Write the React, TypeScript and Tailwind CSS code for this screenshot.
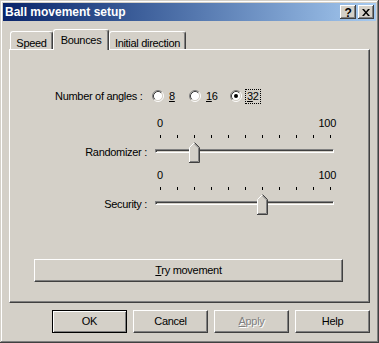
import React from 'react';

const bevel =
  'border-t border-l border-t-white border-l-white border-r border-b border-r-[#404040] border-b-[#404040] shadow-[inset_-1px_-1px_0_#808080]';

const Radio = ({ checked }: { checked: boolean }) => (
  <svg width="12" height="12" viewBox="0 0 12 12" className="shrink-0">
    <circle cx="6" cy="6" r="4.5" fill="#ffffff" />
    <path d="M2.11 9.89 A5.5 5.5 0 0 1 9.89 2.11" stroke="#808080" fill="none" />
    <path d="M9.89 2.11 A5.5 5.5 0 0 1 2.11 9.89" stroke="#ffffff" fill="none" />
    <path d="M2.82 9.18 A4.5 4.5 0 0 1 9.18 2.82" stroke="#404040" fill="none" />
    <path d="M9.18 2.82 A4.5 4.5 0 0 1 2.82 9.18" stroke="#d4d0c8" fill="none" />
    {checked && <circle cx="6" cy="6" r="2" fill="#000000" />}
  </svg>
);

const Thumb = () => (
  <svg width="11" height="21" viewBox="0 0 11 21">
    <polygon points="0,5 5,0 10,5 10,20 0,20" fill="#d4d0c8" />
    <path d="M0.5 20 V5.5 L5.5 0.5" stroke="#ffffff" fill="none" />
    <path d="M5.5 0.5 L10.5 5.5 V20.5 H0" stroke="#404040" fill="none" />
    <path d="M5.5 1.9 L9.5 5.9 V19.5 H1" stroke="#808080" fill="none" />
  </svg>
);

const Slider = ({ label, value }: { label: string; value: number }) => {
  const ticks = Array.from({ length: 11 }, (_, i) => i);
  return (
    <div className="grid grid-cols-[137px_181px] gap-x-[8px]">
      <div />
      <div className="flex flex-col">
        <div className="flex justify-between h-[13px] leading-[13px] pl-[2px]">
          <span>0</span>
          <span>100</span>
        </div>
        <div className="relative h-[3px] mt-[5px]">
          {ticks.map((i) => (
            <div key={i} className="absolute top-0 w-px h-[3px] bg-black" style={{ left: 5 + i * 17 }} />
          ))}
        </div>
      </div>
      <div className="flex items-center justify-end h-[21px] mt-[4px]">{label}</div>
      <div className="relative h-[21px] mt-[4px] w-[179px]">
        <div className="mt-[7px] h-[4px] border-t border-l border-t-[#808080] border-l-[#808080] border-b border-r border-b-white border-r-white shadow-[inset_1px_1px_0_#404040]" />
        <div className="absolute top-0" style={{ left: (value / 100) * 170 }}>
          <Thumb />
        </div>
      </div>
    </div>
  );
};

const Tab = ({ label, active, w }: { label: string; active?: boolean; w: string }) => (
  <div
    className={`${w} flex justify-center bg-[#d4d0c8] border-t border-l border-white border-r border-r-[#404040] rounded-t-[3px] shadow-[inset_-1px_0_0_#808080] ${
      active ? 'h-[21px] -mb-px relative z-10 pt-[2px]' : 'h-[18px] pt-[3px]'
    }`}
  >
    {label}
  </div>
);

export default function App() {
  return (
    <div className="w-[379px] h-[343px] bg-[#d4d0c8] p-[3px] flex flex-col text-[11px] text-black font-['Liberation_Sans',Arial,sans-serif] tracking-[-0.3px] shadow-[inset_-1px_-1px_0_#404040,inset_1px_1px_0_#d4d0c8,inset_-2px_-2px_0_#808080,inset_2px_2px_0_#ffffff]">
      <div className="h-[18px] flex items-center bg-linear-to-r from-[#0a246a] to-[#a6caf0] pl-[2px] pr-[2px]">
        <span className="text-white font-bold text-[12px] tracking-normal">Ball movement setup</span>
        <div className="ml-auto flex gap-[2px]">
          <div className="w-[16px] h-[14px] flex items-center justify-center font-bold text-[12px] leading-none pt-px shadow-[inset_-1px_-1px_0_#404040,inset_1px_1px_0_#fff,inset_-2px_-2px_0_#808080] bg-[#d4d0c8]">
            ?
          </div>
          <div className="w-[16px] h-[14px] flex items-center justify-center shadow-[inset_-1px_-1px_0_#404040,inset_1px_1px_0_#fff,inset_-2px_-2px_0_#808080] bg-[#d4d0c8]">
            <svg width="8" height="7" viewBox="0 0 8 7">
              <path d="M0 0h2l2 2.5L6 0h2L5 3.5 8 7H6L4 4.5 2 7H0l3-3.5z" fill="#000" />
            </svg>
          </div>
        </div>
      </div>

      <div className="px-[6px] mt-[8px] flex flex-col">
        <div className="flex items-end h-[20px] pl-px">
          <Tab label="Speed" w="w-[43px]" />
          <Tab label="Bounces" w="w-[56px]" active />
          <Tab label="Initial direction" w="w-[77px]" />
        </div>
        <div className="h-[254px] border border-t-white border-l-white border-r-[#404040] border-b-[#404040] shadow-[inset_-1px_-1px_0_#808080] pt-[38px] flex flex-col">
          <div className="flex items-center h-[16px] pl-[45px]">
            <span className="w-[97px]">Number of angles :</span>
            <div className="flex items-center w-[37px]">
              <Radio checked={false} />
              <span className="ml-[3px] px-px border border-transparent">
                <u>8</u>
              </span>
            </div>
            <div className="flex items-center w-[41px]">
              <Radio checked={false} />
              <span className="ml-[3px] px-px border border-transparent">
                <u>1</u>6
              </span>
            </div>
            <div className="flex items-center">
              <Radio checked />
              <span className="ml-[3px] px-px border border-dotted border-black leading-[13px]">
                <u>3</u>2
              </span>
            </div>
          </div>

          <div className="mt-[13px]">
            <Slider label="Randomizer :" value={20} />
          </div>
          <div className="mt-[6px]">
            <Slider label="Security :" value={60} />
          </div>

          <div className={`mt-[44px] ml-[24px] w-[309px] h-[23px] flex items-center justify-center ${bevel}`}>
            <span>
              <u>T</u>ry movement
            </span>
          </div>
        </div>

        <div className="mt-[7px] flex justify-end gap-[6px]">
          <div className="w-[75px] h-[23px] flex items-center justify-center border border-black shadow-[inset_1px_1px_0_#fff,inset_-1px_-1px_0_#808080]">
            OK
          </div>
          <div className={`w-[75px] h-[23px] flex items-center justify-center ${bevel}`}>Cancel</div>
          <div className={`w-[75px] h-[23px] flex items-center justify-center text-[#808080] [text-shadow:1px_1px_0_#fff] ${bevel}`}>
            <span>
              <u>A</u>pply
            </span>
          </div>
          <div className={`w-[75px] h-[23px] flex items-center justify-center ${bevel}`}>Help</div>
        </div>
      </div>
    </div>
  );
}
